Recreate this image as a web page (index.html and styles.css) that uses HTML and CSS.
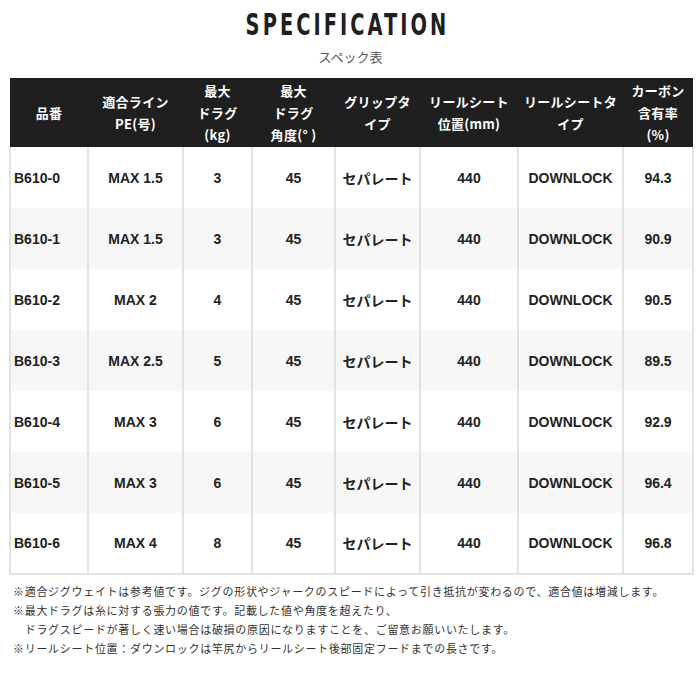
FILE: index.html
```html
<!DOCTYPE html>
<html lang="ja">
<head>
<meta charset="utf-8">
<link rel="stylesheet" href="styles.css">
</head>
<body>
<div class="page">
  <div class="heading">
    <h1 class="title">SPECIFICATION</h1>
    <p class="subtitle">スペック表</p>
  </div>
  <table class="spec">
    <colgroup>
      <col class="c1"><col class="c2"><col class="c3"><col class="c4"><col class="c5"><col class="c6"><col class="c7"><col class="c8">
    </colgroup>
    <thead>
      <tr>
        <th>品番</th>
        <th>適合ライン<br>PE(号)</th>
        <th>最大<br>ドラグ<br>(kg)</th>
        <th>最大<br>ドラグ<br>角度(° )</th>
        <th>グリップタ<br>イプ</th>
        <th>リールシート<br>位置(mm)</th>
        <th>リールシートタ<br>イプ</th>
        <th>カーボン<br>含有率<br>(%)</th>
      </tr>
    </thead>
    <tbody>
      <tr><td>B610-0</td><td>MAX 1.5</td><td>3</td><td>45</td><td>セパレート</td><td>440</td><td>DOWNLOCK</td><td>94.3</td></tr>
      <tr><td>B610-1</td><td>MAX 1.5</td><td>3</td><td>45</td><td>セパレート</td><td>440</td><td>DOWNLOCK</td><td>90.9</td></tr>
      <tr><td>B610-2</td><td>MAX 2</td><td>4</td><td>45</td><td>セパレート</td><td>440</td><td>DOWNLOCK</td><td>90.5</td></tr>
      <tr><td>B610-3</td><td>MAX 2.5</td><td>5</td><td>45</td><td>セパレート</td><td>440</td><td>DOWNLOCK</td><td>89.5</td></tr>
      <tr><td>B610-4</td><td>MAX 3</td><td>6</td><td>45</td><td>セパレート</td><td>440</td><td>DOWNLOCK</td><td>92.9</td></tr>
      <tr><td>B610-5</td><td>MAX 3</td><td>6</td><td>45</td><td>セパレート</td><td>440</td><td>DOWNLOCK</td><td>96.4</td></tr>
      <tr><td>B610-6</td><td>MAX 4</td><td>8</td><td>45</td><td>セパレート</td><td>440</td><td>DOWNLOCK</td><td>96.8</td></tr>
    </tbody>
  </table>
  <div class="notes">
    <p>※適合ジグウェイトは参考値です。ジグの形状やジャークのスピードによって引き抵抗が変わるので、適合値は増減します。</p>
    <p>※最大ドラグは糸に対する張力の値です。記載した値や角度を超えたり、</p>
    <p>　ドラグスピードが著しく速い場合は破損の原因になりますことを、ご留意お願いいたします。</p>
    <p>※リールシート位置：ダウンロックは竿尻からリールシート後部固定フードまでの長さです。</p>
  </div>
</div>
</body>
</html>
```

FILE: styles.css
```css
html, body {
  margin: 0;
  padding: 0;
  background: #ffffff;
}

.page {
  width: 683px;
  margin: 0 0 0 9px;
  font-family: "Liberation Sans", "Noto Sans CJK JP", sans-serif;
  color: #222222;
}

.heading {
  display: flex;
  flex-direction: column;
  align-items: center;
  padding-top: 10px;
  height: 78px;
  box-sizing: border-box;
}

.title {
  margin: 0 0 0 -6px;
  font-family: "DejaVu Sans Condensed", "DejaVu Sans", sans-serif;
  font-weight: 700;
  font-size: 30px;
  line-height: 30px;
  letter-spacing: 4.2px;
  color: #1f1f1f;
  transform: scaleX(0.72);
}

.subtitle {
  margin: 8px 0 0 0;
  font-family: "Noto Sans CJK JP", sans-serif;
  font-size: 13px;
  line-height: 18px;
  color: #555555;
}

.spec {
  width: 683px;
  border-collapse: collapse;
  table-layout: fixed;
}

.c1 { width: 78px; }
.c2 { width: 95px; }
.c3 { width: 69px; }
.c4 { width: 83px; }
.c5 { width: 85px; }
.c6 { width: 98px; }
.c7 { width: 105px; }
.c8 { width: 70px; }

.spec th {
  background: #1f1f1f;
  color: #ffffff;
  font-family: "Noto Sans CJK JP", sans-serif;
  font-weight: 700;
  font-size: 13px;
  line-height: 22px;
  height: 69px;
  padding: 0;
  text-align: center;
  vertical-align: middle;
  white-space: nowrap;
  letter-spacing: 0.3px;
}

.spec td {
  height: 61px;
  padding: 0;
  box-sizing: border-box;
  text-align: center;
  vertical-align: middle;
  font-weight: 700;
  font-size: 14px;
  color: #222222;
  border-left: 2px solid #e2e2e2;
  border-right: 2px solid #e2e2e2;
  white-space: nowrap;
}

.spec td:first-child {
  text-align: left;
  padding-left: 3px;
}

.spec tbody tr:nth-child(even) td {
  background: #f7f7f7;
}

.spec tbody tr:last-child td {
  border-bottom: 2px solid #e2e2e2;
}

.notes {
  margin-top: 7px;
  padding-left: 4px;
  font-family: "Noto Sans CJK JP", sans-serif;
  font-size: 11px;
  line-height: 19px;
  color: #333333;
  letter-spacing: 0.7px;
}

.notes p {
  margin: 0;
  white-space: nowrap;
}
```
